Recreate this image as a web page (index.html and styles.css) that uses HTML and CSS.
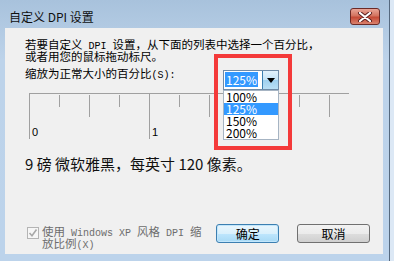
FILE: index.html
```html
<!DOCTYPE html>
<html lang="zh-CN">
<head>
    <meta charset="UTF-8">
    <title>自定义 DPI 设置</title>
    <link rel="stylesheet" href="styles.css">
</head>
<body>
    <div class="window">
        <div class="titlebar">
            <span class="title">自定义 DPI 设置</span>
            <div class="close">
                <svg width="16" height="10" viewBox="0 0 16 10">
                    <path d="M3 1 L13 9 M13 1 L3 9" stroke="#5a1e1e" stroke-width="4" stroke-linecap="round"/>
                    <path d="M3 1 L13 9 M13 1 L3 9" stroke="#fff" stroke-width="2.2" stroke-linecap="round"/>
                </svg>
            </div>
        </div>

        <div class="panel">
            <p class="intro">若要自定义<span class="mono"> DPI </span>设置，从下面的列表中选择一个百分比，或者用您的鼠标拖动标尺。</p>

            <div class="scale-row">
                <span class="scale-label">缩放为正常大小的百分比<span class="mono">(S):</span></span>
                <div class="combo">
                    <div class="combo-field"><span class="selected">125%</span></div>
                    <div class="combo-btn">
                        <svg width="8" height="5" viewBox="0 0 8 5"><path d="M0 0 H8 L4 5 Z" fill="#000"/></svg>
                    </div>
                    <ul class="combo-list">
                        <li>100%</li>
                        <li class="active">125%</li>
                        <li>150%</li>
                        <li>200%</li>
                    </ul>
                </div>
            </div>

            <div class="ruler">
                <div class="tick long"><span>0</span></div>
                <div class="tick short"></div>
                <div class="tick medium"></div>
                <div class="tick short"></div>
                <div class="tick long"><span>1</span></div>
                <div class="tick short"></div>
                <div class="tick medium"></div>
                <div class="tick short"></div>
                <div class="tick long"><span>2</span></div>
                <div class="tick short"></div>
                <div class="tick medium"></div>
            </div>

            <p class="sample">9 磅 微软雅黑，每英寸 120 像素。</p>

            <div class="footer">
                <span class="checkbox">
                    <svg width="12" height="12" viewBox="0 0 12 12"><path d="M2.5 6 L5 8.8 L9.5 2.5" fill="none" stroke="#a8a8a8" stroke-width="1.6"/></svg>
                </span>
                <span class="check-label">使用<span class="mono"> Windows XP </span>风格<span class="mono"> DPI </span>缩放比例<span class="mono">(X)</span></span>
                <button class="btn btn-default">确定</button>
                <button class="btn">取消</button>
            </div>

            <div class="mark"></div>
        </div>
    </div>
</body>
</html>
```

FILE: styles.css
```css
body {
    margin: 0;
    background: #dce8f5;
    font-family: "Noto Sans CJK SC", sans-serif;
}
.window {
    width: 389px;
    height: 261px;
    border-right: 1px solid #55697f;
    background: linear-gradient(#a8c2dc, #bdd3ea 60px, #bcd3eb);
}
.titlebar {
    display: flex;
    justify-content: space-between;
    align-items: flex-start;
    height: 28px;
    padding: 0 9px;
}
.title {
    padding-top: 10px;
    font-size: 12px;
    line-height: 14px;
    color: #111;
}
.close {
    display: flex;
    align-items: center;
    justify-content: center;
    box-sizing: border-box;
    width: 30px;
    height: 17px;
    margin-top: 8px;
    border: 1px solid #6b2a26;
    border-radius: 3px;
    background: linear-gradient(#e9a597, #d3735f 45%, #c54a36 55%, #d9826e);
}
.mono {
    font-family: "Liberation Mono", monospace;
    font-size: 10px;
    line-height: 6px;
}
.panel {
    position: relative;
    display: flex;
    flex-direction: column;
    box-sizing: border-box;
    height: 226px;
    margin: 0 6px 0 5px;
    padding: 10px 13px 5px 20px;
    background: #f0f0f0;
    font-size: 11.5px;
    line-height: 12px;
    color: #000;
}
.intro {
    margin: 0;
    width: 302px;
}
.scale-row {
    display: flex;
    align-items: flex-start;
    margin-top: 5px;
}
.scale-label {
    flex: 0 0 198px;
}
.combo {
    position: relative;
    display: flex;
    box-sizing: border-box;
    width: 56px;
    height: 20px;
    margin-top: 3px;
    border: 1px solid #6f8ba7;
    background: #fff;
    z-index: 2;
}
.combo-field {
    flex: 1;
    padding: 1px 0 0 1px;
}
.selected {
    display: inline-block;
    padding: 0 1px;
    background: #3399ff;
    color: #fff;
    font-size: 12px;
    line-height: 15px;
}
.combo-btn {
    display: flex;
    align-items: center;
    justify-content: center;
    width: 15px;
    border-left: 1px solid #3c7fb1;
    background: linear-gradient(#e3f2fc, #c4e3f7 50%, #9fd0ef 51%, #b9dff5);
}
.combo-list {
    position: absolute;
    top: 19px;
    left: -1px;
    width: 56px;
    box-sizing: border-box;
    margin: 0;
    padding: 0;
    list-style: none;
    background: #fff;
    border: 1px solid #a6b4c3;
    font-size: 12px;
    line-height: 12px;
}
.combo-list li {
    height: 12px;
    padding-left: 2px;
}
.combo-list li.active {
    background: #3399ff;
    color: #fff;
}
.ruler {
    display: flex;
    width: 320px;
    height: 46px;
    margin: 3px 0 0 4px;
    border-top: 1px solid #a0a0a0;
    overflow: hidden;
    align-items: flex-start;
}
.tick {
    flex: 0 0 30px;
    box-sizing: border-box;
    border-left: 1px solid #a0a0a0;
}
.tick.short {
    margin-top: 1px;
    height: 12px;
}
.tick.medium {
    margin-top: 1px;
    height: 22px;
}
.tick.long {
    display: flex;
    flex-direction: column;
    justify-content: flex-end;
    height: 45px;
    padding: 0 0 1px 2px;
    font-family: "Liberation Sans", sans-serif;
    font-size: 11px;
    line-height: 11px;
}
.sample {
    margin: 15px 0 0;
    font-size: 15px;
    line-height: 18px;
    color: #111;
}
.footer {
    display: flex;
    align-items: flex-start;
    margin-top: auto;
}
.checkbox {
    display: flex;
    box-sizing: border-box;
    width: 12px;
    height: 12px;
    margin: 3px 0 0 2px;
    border: 1px solid #b4b4b4;
    background: #f6f6f6;
}
.checkbox svg {
    margin: -1px;
}
.check-label {
    width: 168px;
    margin: 1px 0 0 3px;
    color: #6d6d6d;
}
.btn {
    box-sizing: border-box;
    width: 73px;
    height: 19px;
    margin-left: 18px;
    padding: 0;
    border: 1px solid #707070;
    border-radius: 3px;
    background: linear-gradient(#f2f2f2, #ebebeb 50%, #dddddd 51%, #cfcfcf);
    font-family: "Noto Sans CJK SC", sans-serif;
    font-size: 12px;
    line-height: 16px;
    color: #000;
}
.btn-default {
    width: 63px;
    margin-left: 7px;
    border-color: #3c7fb1;
    background: linear-gradient(#eaf6fd, #d9f0fc 50%, #bee6fd 51%, #a7d9f5);
    box-shadow: inset 0 0 0 1px #c2e6fb;
}
.mark {
    position: absolute;
    left: 209px;
    top: 26px;
    width: 78px;
    height: 96px;
    box-sizing: border-box;
    border: 4px solid #f43a3a;
    z-index: 1;
}
```
